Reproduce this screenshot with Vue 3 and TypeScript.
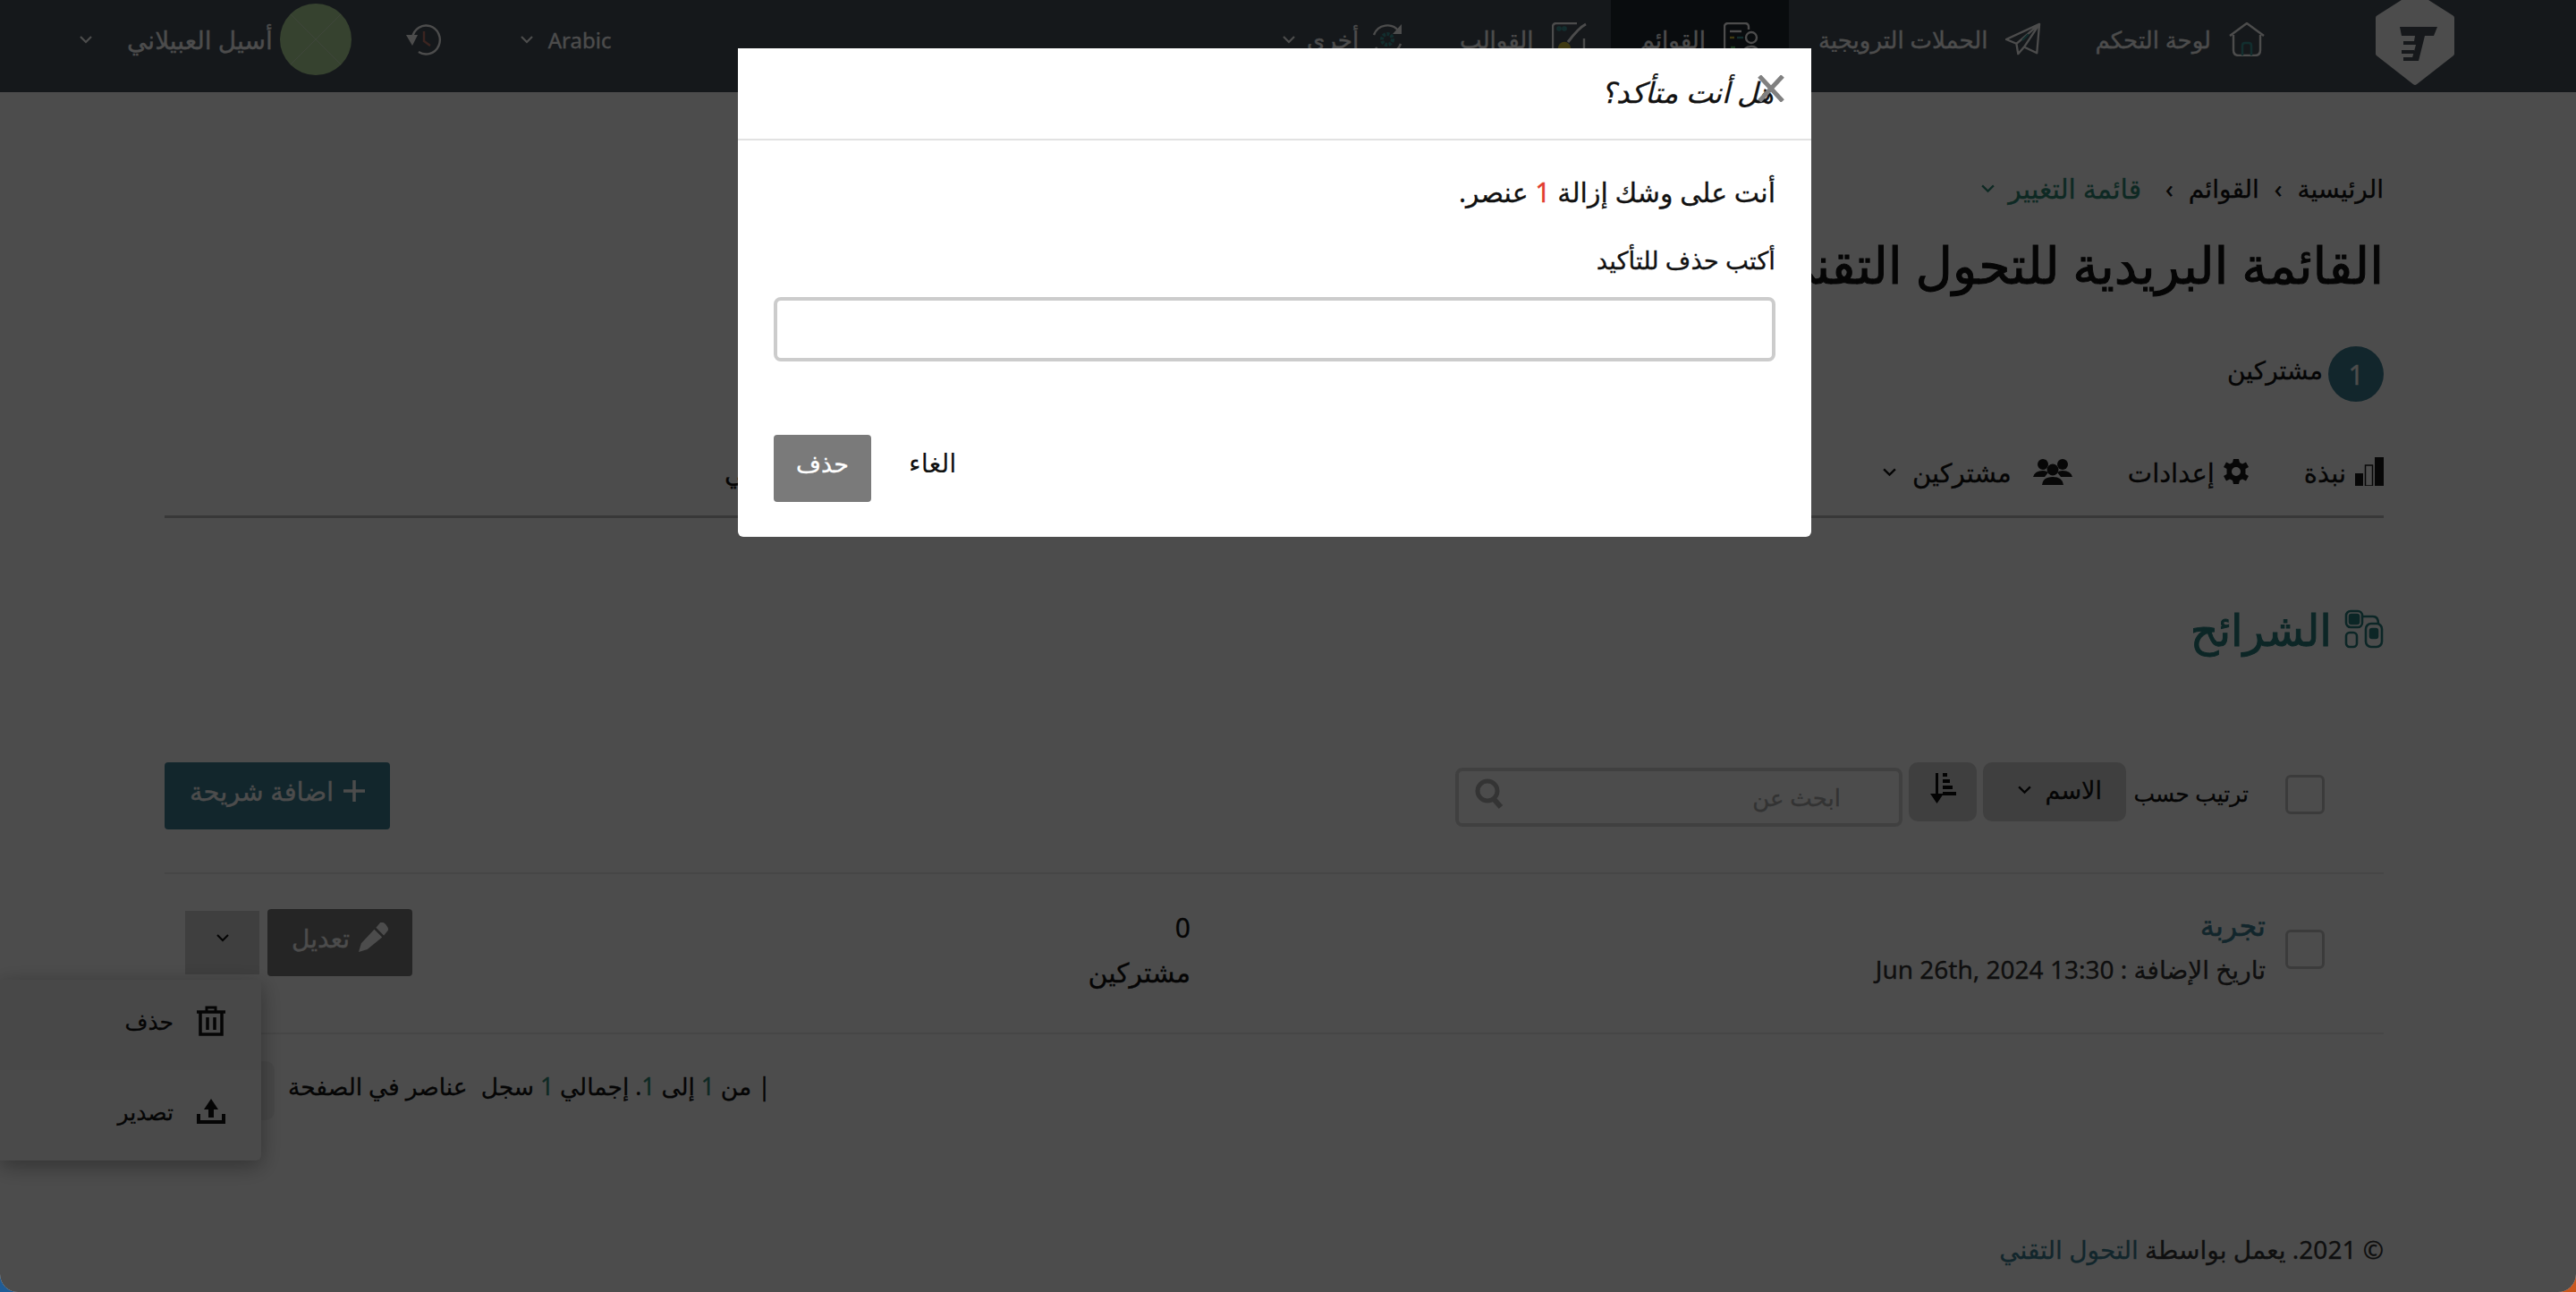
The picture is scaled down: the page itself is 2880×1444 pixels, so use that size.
<template>
  <div class="desktop" dir="rtl">
    <div class="page">
      <header class="topbar">
        <svg class="logo" viewBox="0 0 90 96">
          <path d="M45 -6 L86 20 V60 L45 92 L4 60 V20 Z" fill="#fff" stroke="#fff" stroke-width="6" stroke-linejoin="round" />
          <path transform="translate(0 6)" d="M28 24 H70 L66 34 H56 L49 62 H41 L46 44 H32 V40 H44 L45 34 H30 Z M30 50 H44 V54 H30 Z M32 58 H42 V62 H32 Z" fill="#4a535d" />
        </svg>
        <nav class="nav">
          <a class="nav-item home">
            <svg class="nav-icon" viewBox="0 0 40 38" fill="none" stroke="#fff" stroke-width="2.4">
              <path d="M1 15 L20 1 L39 15 M5 14 V31 Q5 37 11 37 H29 Q35 37 35 31 V14" />
              <path d="M15 37 V26 Q15 23 18 23 H22 Q25 23 25 26 V37" stroke="#3f9a9c" />
            </svg>
            <span>لوحة التحكم</span>
          </a>
          <a class="nav-item send">
            <svg class="nav-icon" viewBox="0 0 42 38" fill="none" stroke="#fff" stroke-width="2.4" stroke-linejoin="round">
              <path d="M40 1 L1 19 L13 24 L15 36 L22 28 L37 35 Z M13 24 L40 1 M22 28 L40 1" />
              <path d="M20 20 L27 13" stroke="#3f9a9c" />
            </svg>
            <span>الحملات الترويجية</span>
          </a>
          <a class="nav-item active">
            <svg class="nav-icon" viewBox="0 0 40 38" fill="none" stroke="#fff" stroke-width="2.4">
              <path d="M28 8 V5 Q28 1 24 1 H5 Q1 1 1 5 V37" />
              <path d="M7 10 H20" />
              <path d="M7 17 H12" stroke="#d8c33a" />
              <path d="M15 17 H22" stroke="#3f9a9c" />
              <circle cx="31" cy="17" r="6" />
              <path d="M20 37 Q22 27 31 27 Q39 27 40 37" />
              <path d="M8 28 H13" stroke="#5bbf6a" />
            </svg>
            <span>القوائم</span>
          </a>
          <a class="nav-item templates">
            <svg class="nav-icon" viewBox="0 0 40 38" fill="none" stroke="#fff" stroke-width="2.4">
              <path d="M28 1 H5 Q1 1 1 5 V37 M36 18 V37" />
              <circle cx="8" cy="7" r="1.6" stroke="#3f9a9c" />
              <circle cx="14" cy="7" r="1.6" stroke="#3f9a9c" />
              <path d="M38 2 Q30 6 18 22" stroke-width="3" />
              <circle cx="14" cy="29" r="6" fill="#d8c33a" stroke="#d8c33a" />
            </svg>
            <span>القوالب</span>
          </a>
          <a class="nav-item other">
            <svg class="nav-icon" viewBox="0 0 38 38" fill="none" stroke="#fff" stroke-width="2.4">
              <path d="M4 14 A16 16 0 0 1 32 10 M34 24 A16 16 0 0 1 6 28" />
              <path d="M35 2 V13 H25 Z" fill="#fff" stroke="none" />
              <circle cx="19" cy="19" r="6" stroke="#3f9a9c" stroke-width="4" stroke-dasharray="3 1.5" />
            </svg>
            <span>أخرى</span>
            <svg class="chevron" viewBox="0 0 16 10"><path d="M2 2 L8 8 L14 2" /></svg>
          </a>
        </nav>
        <div class="tools">
          <div class="lang">
            <span lang="en">Arabic</span>
            <svg class="chevron" viewBox="0 0 16 10"><path d="M2 2 L8 8 L14 2" /></svg>
          </div>
          <svg class="history" viewBox="0 0 40 36" fill="none" stroke="#fff" stroke-width="2.4">
            <path d="M7 16 A15.5 16 0 1 1 14 32" />
            <path d="M0 13 H13 L7 25 Z" fill="#fff" stroke="none" />
            <path d="M20 9 V20 L27 25" stroke="#c77a6b" />
          </svg>
          <svg class="avatar" viewBox="0 0 80 80">
            <circle cx="40" cy="40" r="40" fill="#b5dd9e" />
            <path d="M12 12 L68 68 M68 12 L12 68" stroke="#cfe6c2" stroke-width="1" />
          </svg>
          <span class="user-name">أسيل العبيلاني</span>
          <svg class="chevron" viewBox="0 0 16 10"><path d="M2 2 L8 8 L14 2" /></svg>
        </div>
      </header>

      <main class="content">
        <div class="crumbs">
          <span>الرئيسية</span>
          <i class="sep">›</i>
          <span>القوائم</span>
          <i class="sep">›</i>
          <span class="crumb-current">قائمة التغيير</span>
          <svg class="chevron small" viewBox="0 0 16 10"><path d="M2 2 L8 8 L14 2" /></svg>
        </div>
        <h1 class="list-title">القائمة البريدية للتحول التقني</h1>
        <div class="subscribers">
          <span class="badge">1</span>
          <span class="subscribers-label">مشتركين</span>
        </div>

        <div class="tabs">
          <a class="tab">
            <svg class="tab-icon" viewBox="0 0 32 32" fill="#1a1a1a">
              <rect x="0" y="18" width="9" height="14" />
              <rect x="11.5" y="9" width="8" height="23" fill="none" stroke="#1a1a1a" stroke-width="1.5" />
              <rect x="22" y="0" width="10" height="32" />
            </svg>
            <span>نبذة</span>
          </a>
          <a class="tab">
            <svg class="tab-icon gear" viewBox="0 0 28 28">
              <path fill-rule="evenodd" fill="#1a1a1a" d="M11 0 H17 L18 4 L21 5.5 L25 3.5 L28 9 L24.5 11 V17 L28 19 L25 24.5 L21 22.5 L18 24 L17 28 H11 L10 24 L7 22.5 L3 24.5 L0 19 L3.5 17 V11 L0 9 L3 3.5 L7 5.5 L10 4 Z M14 9 A5 5 0 1 0 14 19 A5 5 0 1 0 14 9 Z" />
            </svg>
            <span>إعدادات</span>
          </a>
          <a class="tab">
            <svg class="tab-icon people" viewBox="0 0 44 30" fill="#1a1a1a">
              <circle cx="11" cy="7" r="6" />
              <circle cx="33" cy="7" r="6" />
              <path d="M0 21 Q2 14 11 14 Q15 14 17 16 L13 21 Z M44 21 Q42 14 33 14 Q29 14 27 16 L31 21 Z" />
              <circle cx="22" cy="13" r="6.5" />
              <path d="M10 30 Q11 21 22 21 Q33 21 34 30 Z" />
            </svg>
            <span class="people-label">مشتركين</span>
            <svg class="chevron small dark" viewBox="0 0 16 10"><path d="M2 2 L8 8 L14 2" /></svg>
          </a>
          <a class="tab tab-hidden">ذاتي</a>
        </div>

        <h2 class="section-title">
          <svg class="section-icon" viewBox="0 0 44 44" fill="none" stroke="#2a8080" stroke-width="2.6">
            <rect x="2" y="2" width="18" height="18" rx="5" />
            <rect x="2" y="26" width="12" height="16" rx="4" />
            <rect x="24" y="16" width="18" height="26" rx="6" />
            <path d="M20 8 H32 Q38 8 38 16" />
            <rect x="6" y="6" width="10" height="10" rx="2" fill="#2a8080" />
            <rect x="29" y="22" width="8" height="10" rx="2" fill="#2a8080" />
          </svg>
          <span>الشرائح</span>
        </h2>

        <div class="toolbar">
          <span class="check toolbar-check"></span>
          <span class="sort-label">ترتيب حسب</span>
          <div class="sort-select">
            <span>الاسم</span>
            <svg class="chevron small dark" viewBox="0 0 16 10"><path d="M2 2 L8 8 L14 2" /></svg>
          </div>
          <button class="sort-button">
            <svg viewBox="0 0 30 34" width="30" height="34" fill="#0d0d0d">
              <rect x="7" y="0" width="3" height="26" />
              <path d="M1 23 H16 L8.5 34 Z" />
              <rect x="15" y="0" width="5" height="4" />
              <rect x="15" y="7" width="8" height="4" />
              <rect x="15" y="14" width="11" height="4" />
              <rect x="15" y="21" width="15" height="4" />
            </svg>
          </button>
          <div class="search">
            <span class="search-text">ابحث عن</span>
            <svg class="search-icon" viewBox="0 0 32 34" fill="none" stroke="#b0b0b0" stroke-width="5">
              <circle cx="14" cy="14" r="11" />
              <path d="M21 23 L29 32" stroke-width="6" />
            </svg>
          </div>
          <button class="add-button">
            <svg viewBox="0 0 24 24" width="24" height="24" stroke="currentColor" stroke-width="3.5"><path d="M12 0 V24 M0 12 H24" /></svg>
            <span>اضافة شريحة</span>
          </button>
        </div>

        <div class="row">
          <div class="row-main">
            <span class="check"></span>
            <div class="row-text">
              <a class="row-name">تجربة</a>
              <span class="row-date">تاريخ الإضافة : <bdi>Jun 26th, 2024 13:30</bdi></span>
            </div>
          </div>
          <div class="row-side">
            <div class="row-count">
              <span>0</span>
              <span>مشتركين</span>
            </div>
            <div class="row-actions">
              <button class="edit-button">
                <svg viewBox="0 0 34 34" width="33" height="33" fill="currentColor">
                  <path d="M25 0 Q28 -1 31 2 L33 5 Q35 8 33 10 L29 15 L20 6 Z M18 8 L27 17 L10 31 L0 34 L3 24 Z" />
                </svg>
                <span>تعديل</span>
              </button>
              <div class="more">
                <button class="more-button">
                  <svg class="chevron dark" viewBox="0 0 16 10"><path d="M2 2 L8 8 L14 2" /></svg>
                </button>
                <div class="menu">
                  <a class="menu-item hovered">
                    <svg viewBox="0 0 32 34" width="32" height="34" fill="none" stroke="#111" stroke-width="3.5">
                      <path d="M0 7 H32" />
                      <path d="M11 6 V2 H21 V6" stroke-width="3" />
                      <path d="M4 8 V32 H28 V8 M12 13 V27 M20 13 V27" />
                    </svg>
                    <span>حذف</span>
                  </a>
                  <a class="menu-item">
                    <svg viewBox="0 0 32 28" width="32" height="28" fill="#111">
                      <path d="M16 0 L24 12 H19 V21 H13 V12 H8 Z" />
                      <path d="M0 17 H4 V24 H28 V17 H32 V28 H0 Z" />
                    </svg>
                    <span>تصدير</span>
                  </a>
                </div>
              </div>
            </div>
          </div>
        </div>

        <div class="pager">
          <span>| من <b>1</b> إلى <b>1</b>. إجمالي <b>1</b> سجل</span>
          <span>عناصر في الصفحة</span>
          <span class="pager-select"></span>
        </div>

        <footer class="footer">
          © 2021. يعمل بواسطة <a>التحول التقني</a>
        </footer>
      </main>
    </div>

    <div class="overlay">
      <div class="modal">
        <div class="modal-head">
          <h3>هل أنت متأكد؟</h3>
          <svg class="modal-close" viewBox="0 0 30 30" stroke="#808080" stroke-width="5"><path d="M2 1 L28 29 M28 1 L2 29" /></svg>
        </div>
        <div class="modal-body">
          <p class="modal-text">أنت على وشك إزالة <span class="count">{{ removeCount }}</span> عنصر.</p>
          <label class="modal-label">أكتب حذف للتأكيد</label>
          <input class="modal-input" type="text" />
          <div class="modal-actions">
            <button class="confirm">حذف</button>
            <a class="cancel">الغاء</a>
          </div>
        </div>
      </div>
    </div>
  </div>
</template>

<script setup lang="ts">
import { ref } from "vue";

const removeCount = ref<number>(1);
</script>

<style>
html,
body {
  margin: 0;
  background: #fff;
}
</style>

<style scoped>
.desktop {
  position: relative;
  width: 2880px;
  height: 1444px;
  overflow: hidden;
  background: linear-gradient(90deg, #1f5c96 50%, #c9561c 50%);
  font-family: "Noto Sans", "Open Sans", "DejaVu Sans", sans-serif;
  color: #111;
  -webkit-text-stroke: 0.3px;
}
.page {
  height: 1444px;
  background: #fff;
  border-radius: 0 0 20px 20px;
  overflow: hidden;
}
a {
  color: inherit;
  text-decoration: none;
}
button {
  font: inherit;
  border: 0;
  padding: 0;
}
.chevron {
  width: 16px;
  height: 10px;
  flex: none;
  fill: none;
  stroke: #fff;
  stroke-width: 2.2;
}
.chevron.small {
  width: 17px;
  height: 11px;
  stroke: #2f8a76;
}
.chevron.dark,
.chevron.small.dark {
  stroke: #111;
}

.topbar {
  height: 103px;
  display: flex;
  align-items: flex-start;
  background: #49535d;
  color: #fff;
  font-size: 26px;
  padding: 0 135px 0 88px;
  box-sizing: border-box;
}
.logo {
  width: 90px;
  height: 96px;
  flex: none;
  margin-left: 90px;
}
.nav {
  display: flex;
  height: 100%;
}
.nav-item {
  display: flex;
  align-items: center;
  gap: 20px;
  padding: 0 33px;
  height: 88px;
}
.nav-icon {
  width: 40px;
  height: 38px;
  flex: none;
}
.home {
  padding-left: 27px;
}
.nav-item.active {
  background: #21282f;
  height: 103px;
  padding-bottom: 15px;
  box-sizing: border-box;
}
.templates {
  padding: 0 26px 0 28px;
}
.other {
  gap: 12px;
}
.tools {
  margin-right: auto;
  display: flex;
  align-items: center;
  height: 88px;
}
.lang {
  display: flex;
  align-items: center;
  gap: 16px;
  margin-left: 87px;
  font-size: 24px;
}
.history {
  width: 40px;
  height: 36px;
  margin-left: 61px;
}
.avatar {
  width: 80px;
  height: 80px;
  margin-left: 8px;
  flex: none;
}
.user-name {
  margin-left: 38px;
  font-size: 28px;
}

.content {
  padding: 0 215px 0 184px;
}
.crumbs {
  display: flex;
  align-items: center;
  gap: 14px;
  height: 40px;
  margin-top: 87px;
  font-size: 28px;
  color: #111;
}
.sep {
  font-style: normal;
  margin: 0 3px;
}
.crumb-current {
  color: #2f8a76;
  margin-right: 10px;
  font-size: 30px;
}
.list-title {
  font-size: 57px;
  font-weight: 500;
  line-height: 70px;
  height: 70px;
  margin: 30px 0 0;
  white-space: nowrap;
  -webkit-text-stroke: 1px;
}
.subscribers {
  display: flex;
  align-items: center;
  gap: 6px;
  margin-top: 56px;
  font-size: 28px;
  height: 64px;
}
.subscribers-label {
  margin-bottom: 10px;
}
.badge {
  width: 62px;
  height: 62px;
  border-radius: 50%;
  background: #3f7f93;
  color: #fff;
  display: flex;
  align-items: center;
  justify-content: center;
  font-size: 30px;
}
.tabs {
  display: flex;
  align-items: center;
  height: 79px;
  margin-top: 50px;
  padding-bottom: 22px;
  box-sizing: border-box;
  font-size: 29px;
  border-bottom: 3px solid #bcbcbc;
}
.tab {
  display: flex;
  align-items: center;
  gap: 10px;
  margin-left: 62px;
}
.tab-icon {
  width: 32px;
  height: 32px;
  flex: none;
}
.gear {
  width: 28px;
  height: 28px;
}
.people {
  width: 44px;
  height: 30px;
}
.people-label {
  margin: 0 14px 0 7px;
}
.tab-hidden {
  margin-right: auto;
  margin-left: 626px;
  white-space: nowrap;
}
.section-title {
  display: flex;
  align-items: center;
  gap: 14px;
  margin: 100px 0 0;
  height: 48px;
  font-size: 49px;
  font-weight: 500;
  color: #2a8080;
  -webkit-text-stroke: 1px;
}
.section-icon {
  width: 44px;
  height: 44px;
  flex: none;
}
.toolbar {
  display: flex;
  align-items: flex-start;
  height: 75px;
  margin-top: 125px;
  padding-right: 66px;
  font-size: 25px;
}
.check {
  display: block;
  width: 44px;
  height: 44px;
  box-sizing: border-box;
  border: 3px solid #c6c6c6;
  border-radius: 6px;
  flex: none;
}
.toolbar-check {
  margin: 14px 0 0 41px;
}
.sort-label {
  width: 128px;
  white-space: nowrap;
  line-height: 68px;
  margin-left: 9px;
}
.sort-select {
  width: 160px;
  height: 66px;
  box-sizing: border-box;
  padding: 0 27px 6px 38px;
  background: #d3d3d3;
  border-radius: 10px;
  display: flex;
  align-items: center;
  justify-content: space-between;
  margin-left: 7px;
  font-size: 27px;
}
.sort-button {
  width: 76px;
  height: 66px;
  background: #d3d3d3;
  border-radius: 10px;
  margin-left: 7px;
  display: flex;
  align-items: flex-start;
  justify-content: center;
  padding-top: 12px;
  box-sizing: border-box;
}
.search {
  width: 500px;
  height: 66px;
  margin-top: 6px;
  box-sizing: border-box;
  border: 4px solid #d6d6d6;
  border-radius: 8px;
  display: flex;
  align-items: center;
  justify-content: space-between;
  padding: 0 65px 0 14px;
  font-size: 26px;
}
.search-text {
  color: #aaa;
}
.search-icon {
  width: 32px;
  height: 34px;
  margin-left: 4px;
  margin-bottom: 8px;
}
.add-button {
  margin-right: auto;
  width: 252px;
  height: 75px;
  background: #3f7f93;
  color: #fff;
  border-radius: 4px;
  display: flex;
  align-items: center;
  justify-content: center;
  gap: 11px;
  padding-bottom: 12px;
  box-sizing: border-box;
  font-size: 29px;
}
.row {
  display: grid;
  grid-template-columns: 1334px 1fr;
  margin-top: 48px;
  height: 181px;
  border-top: 2px solid #ececec;
  border-bottom: 2px solid #ececec;
  box-sizing: border-box;
}
.row-main {
  display: flex;
  align-items: flex-start;
  gap: 22px;
  padding: 62px 66px 0 0;
}
.row-text {
  display: flex;
  flex-direction: column;
  margin-top: -27px;
}
.row-name {
  font-size: 32px;
  line-height: 44px;
  color: #3f7f93;
  -webkit-text-stroke: 0.6px;
}
.row-date {
  font-size: 28px;
  line-height: 54px;
  color: #333;
}
.row-side {
  display: flex;
  justify-content: space-between;
  padding: 39px 0 0 23px;
}
.row-count {
  display: flex;
  flex-direction: column;
  font-size: 30px;
  line-height: 50px;
  margin-top: -4px;
}
.row-actions {
  display: flex;
  align-items: flex-start;
  gap: 9px;
  height: 75px;
}
.edit-button {
  width: 162px;
  height: 75px;
  background: #7e7e7e;
  color: #fff;
  border-radius: 4px;
  display: flex;
  align-items: center;
  justify-content: center;
  gap: 10px;
  padding-bottom: 12px;
  box-sizing: border-box;
  font-size: 28px;
}
.more {
  position: relative;
}
.more-button {
  width: 83px;
  height: 71px;
  margin-top: 2px;
  background: #d3d3d3;
  display: flex;
  align-items: center;
  justify-content: center;
  padding-bottom: 12px;
  box-sizing: border-box;
}
.menu {
  position: absolute;
  top: 79px;
  right: -2px;
  width: 292px;
  height: 202px;
  background: #f8f8f8;
  border-radius: 0 0 6px 0;
  box-shadow: 0 6px 24px rgba(0, 0, 0, 0.35);
  z-index: 2;
}
.menu-item {
  display: flex;
  align-items: center;
  gap: 26px;
  height: 101px;
  padding: 0 40px 9px 0;
  box-sizing: border-box;
  font-size: 25px;
}
.menu-item.hovered {
  background: #f0f0f0;
}
.pager {
  display: flex;
  justify-content: flex-end;
  gap: 15px;
  align-items: flex-start;
  height: 66px;
  margin-top: 30px;
  font-size: 26.5px;
  line-height: 56px;
}
.pager b {
  font-weight: 400;
  color: #2f8a76;
}
.pager-select {
  width: 123px;
  height: 66px;
  background: #f0f0f0;
  border-radius: 10px;
}
.footer {
  margin-top: 127px;
  font-size: 28px;
  line-height: 34px;
  color: #333;
}
.footer a {
  color: #3f7f93;
}

.overlay {
  position: absolute;
  inset: 0;
  background: rgba(0, 0, 0, 0.7);
  border-radius: 0 0 20px 20px;
  direction: ltr;
  z-index: 5;
}
.modal {
  direction: rtl;
  width: 1200px;
  height: 546px;
  margin: 54px 0 0 825px;
  background: #fff;
  border-radius: 0 0 6px 6px;
  display: flex;
  flex-direction: column;
}
.modal-head {
  position: relative;
  height: 103px;
  flex: none;
  box-sizing: border-box;
  border-bottom: 2px solid #e2e2e2;
  padding: 27px 42px 0;
}
.modal-head h3 {
  margin: 0;
  font-size: 32px;
  font-weight: 400;
  font-style: italic;
  line-height: 44px;
}
.modal-close {
  position: absolute;
  top: 30px;
  right: 30px;
  width: 30px;
  height: 30px;
}
.modal-body {
  padding: 32px 40px 0;
}
.modal-text {
  margin: 0;
  font-size: 30px;
  line-height: 52px;
}
.count {
  color: #e23b2e;
}
.modal-label {
  display: block;
  font-size: 27.5px;
  line-height: 40px;
  margin-top: 30px;
}
.modal-input {
  display: block;
  width: 100%;
  height: 72px;
  margin-top: 21px;
  box-sizing: border-box;
  border: 4px solid #ccc;
  border-radius: 8px;
  background: #fff;
  outline: 0;
}
.modal-actions {
  display: flex;
  flex-direction: row-reverse;
  align-items: flex-start;
  gap: 42px;
  margin-top: 82px;
}
.confirm {
  width: 109px;
  height: 75px;
  background: #7a7a7a;
  color: #fff;
  border-radius: 4px;
  font-size: 27px;
  font-weight: 500;
  padding-bottom: 12px;
}
.cancel {
  font-size: 29px;
  font-weight: 400;
  line-height: 62px;
  -webkit-text-stroke: 0;
}
</style>
